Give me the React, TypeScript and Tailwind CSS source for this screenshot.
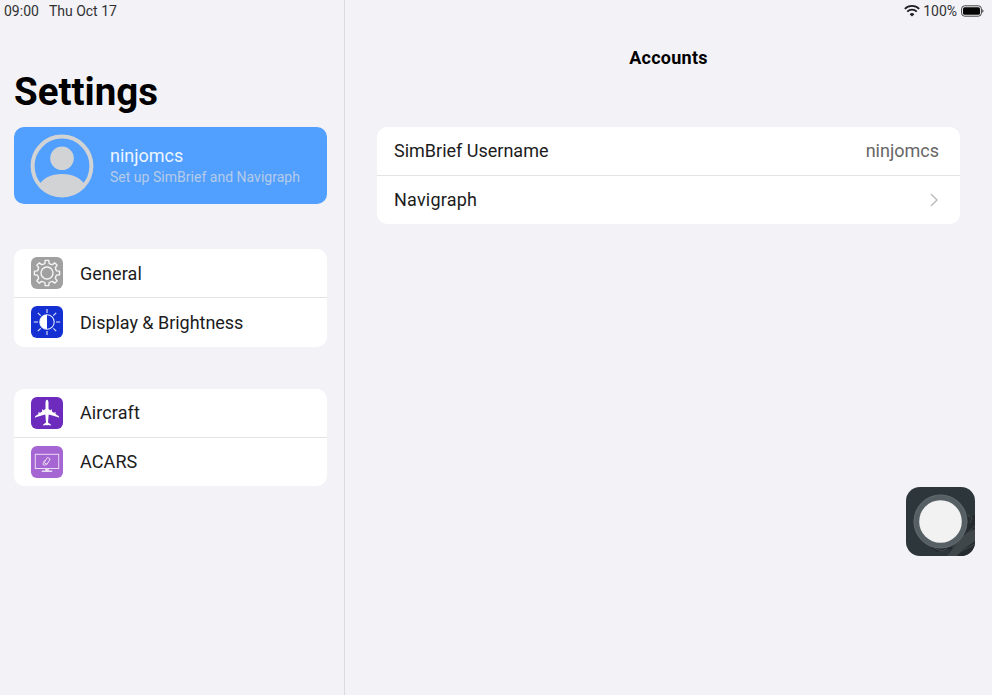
import type { ReactNode } from "react";

function GearIcon() {
  const teeth = Array.from({ length: 8 }, (_, i) => i * 45);
  const at = (deg: number, r: number) => {
    const a = ((deg - 90) * Math.PI) / 180;
    return `${(16 + r * Math.cos(a)).toFixed(2)} ${(16 + r * Math.sin(a)).toFixed(2)}`;
  };
  const d =
    teeth
      .map(
        (t, i) =>
          `${i === 0 ? "M" : "L"}${at(t - 12, 10)} L${at(t - 8, 12.7)} L${at(t + 8, 12.7)} L${at(t + 12, 10)} Q${at(t + 22.5, 9.1)} ${at(t + 33, 10)}`
      )
      .join(" ") + "Z";
  return (
    <svg viewBox="0 0 32 32" className="size-8 shrink-0" fill="none" stroke="#f4f4f4" strokeWidth="1.4" strokeLinejoin="round">
      <rect width="32" height="32" rx="6" fill="#a0a0a0" stroke="none" />
      <path d={d} />
      <circle cx="16" cy="16" r="6" />
    </svg>
  );
}

function BrightnessIcon() {
  return (
    <svg viewBox="0 0 32 32" className="-mt-[2px] size-8 shrink-0" fill="none" stroke="#e3e8fb" strokeWidth="1.1">
      <rect width="32" height="32" rx="6" fill="#1430d2" stroke="none" />
      <circle cx="16" cy="16" r="7.2" />
      <path d="M16 8.8a7.2 7.2 0 0 0 0 14.4z" fill="#fff" stroke="none" />
      <path d="M16 3v4M16 25v4M2.8 16H7M25 16h4.2M6.8 6.8l2.9 2.9M22.3 22.3l2.9 2.9M25.2 6.8l-2.9 2.9M9.7 22.3l-2.9 2.9" />
    </svg>
  );
}

function PlaneIcon() {
  return (
    <svg viewBox="0 0 32 32" className="size-8 shrink-0">
      <rect width="32" height="32" rx="6" fill="#6c2bbd" />
      <path
        fill="#fff"
        d="M16 2.8c-.9 0-1.5 1.6-1.5 3.3v6l-2.3 1.5v-1.2h-1.1v2l-2.6 1.8v-1.1h-1v1.8l-3 2.1c-.5.4-.6.9-.6 1.7l1.6-.6 8.8-2.5.7 7.8-2.7 2c-.4.3-.4.7-.4 1.2l3.3-.6.8.5.8-.5 3.3.6c0-.5 0-.9-.4-1.2l-2.7-2 .7-7.8 8.8 2.5 1.6.6c0-.8-.1-1.3-.6-1.7l-3-2.1v-1.8h-1v1.1l-2.6-1.8v-2h-1.1v1.2l-2.3-1.5v-6c0-1.7-.6-3.3-1.5-3.3z"
      />
    </svg>
  );
}

function AcarsIcon() {
  return (
    <svg viewBox="0 0 32 32" className="size-8 shrink-0" fill="none" stroke="#eadbf5" strokeWidth="1">
      <rect width="32" height="32" rx="6" fill="#a565d2" stroke="none" />
      <rect x="4.3" y="8.3" width="23.4" height="14.2" />
      <path d="M14.2 22.2h3.6v2.4h3.4V26H10.8v-1.4h3.4z" fill="#eadbf5" stroke="none" />
      <path d="M16.4 11.4l2.8 1.6-3.2 5.3-2.8-1.6zM13.6 14.3c-1.4 1.6-1.7 3.3-1.2 4.7 1.6.3 3-.1 4.3-1.4" />
    </svg>
  );
}

function Avatar() {
  return (
    <svg viewBox="0 0 64 64" className="size-16 shrink-0">
      <clipPath id="avatar-disc">
        <circle cx="32" cy="32" r="31" />
      </clipPath>
      <circle cx="32" cy="32" r="29.4" fill="none" stroke="#d2d3d5" strokeWidth="4" />
      <circle cx="32" cy="24.3" r="11.8" fill="#d2d3d5" />
      <path d="M8 53C12 44 21 40 32 40s20 4 24 13v11H8z" fill="#d2d3d5" clipPath="url(#avatar-disc)" />
    </svg>
  );
}

function WifiIcon() {
  return (
    <svg viewBox="0 0 16 13" className="-mt-px h-[13px] w-4" fill="none" stroke="#202020" strokeWidth="1.7">
      <path d="M.8 4.9a10.2 10.2 0 0 1 14.4 0M3.2 7.7a6.8 6.8 0 0 1 9.6 0" />
      <path d="M5.6 10.2a3.4 3.4 0 0 1 4.8 0L8 12.6z" fill="#202020" stroke="none" />
    </svg>
  );
}

function BatteryIcon() {
  return (
    <svg viewBox="0 0 23 12" className="-mt-px h-3 w-[23px]">
      <rect x=".6" y=".8" width="19.8" height="10.4" rx="3" fill="none" stroke="#444" strokeWidth="1" />
      <rect x="2" y="2.2" width="17" height="7.6" rx="1.6" fill="#050505" />
      <path d="M21.3 4.2c1.6.5 1.6 3 0 3.5z" fill="#333" />
    </svg>
  );
}

function MenuRow({ icon, label, className }: { icon: ReactNode; label: string; className: string }) {
  return (
    <div className={`flex items-center gap-[17px] pl-[17px] ${className}`}>
      {icon}
      <span className="text-[18px] text-[#1c1c1c]">{label}</span>
    </div>
  );
}

function HomeButton() {
  return (
    <svg viewBox="0 0 69 69" className="absolute top-[487px] left-[906px] size-[69px]">
      <clipPath id="home-tile">
        <rect width="69" height="69" rx="14" />
      </clipPath>
      <g clipPath="url(#home-tile)">
        <rect width="69" height="69" fill="#2d363a" />
        <path d="M69 28L61 31 47 59 24 59 31 65 45 62 42 69 69 69z" fill="#252b2f" />
        <path d="M69 42C58 46 52 55 41 69h9c7-8 13-10 19-15z" fill="#40474b" />
        <path d="M50 69c5-6 12-8 19-12M46 61C55 54 60 46 69 39M28 61l7 3 6-2M62 28l4 3-2 5" stroke="#4b5256" strokeWidth=".8" fill="none" />
        <circle cx="34.5" cy="34.5" r="27" fill="#566064" />
        <circle cx="34.5" cy="34.5" r="26.4" fill="none" stroke="#626b6e" strokeWidth=".8" />
        <circle cx="34.5" cy="34.5" r="21.3" fill="#f2f2f2" />
      </g>
    </svg>
  );
}

export default function App() {
  return (
    <div className="relative flex h-[695px] w-[992px] overflow-hidden bg-[#f2f2f7] font-['Roboto','Liberation_Sans',sans-serif] text-black">
      <aside className="w-[345px] shrink-0 border-r border-[#dcdce0] pr-[17px] pl-[14px]">
        <div className="-ml-[10px] flex h-[22px] items-center gap-[10px] text-[14px] text-[#303033]">
          <span>09:00</span>
          <span>Thu Oct 17</span>
        </div>
        <h1 className="mt-[46px] h-[59px] text-[38.5px] leading-[48px] font-bold">Settings</h1>
        <div className="flex h-[77px] items-center rounded-[10px] bg-[#519fff] pl-4">
          <Avatar />
          <div className="ml-4 pt-px">
            <div className="text-[18px] leading-[22px] text-[#edf5ff]">ninjomcs</div>
            <div className="text-[14px] leading-5 tracking-[0.02px] text-[#b6cbe8]">Set up SimBrief and Navigraph</div>
          </div>
        </div>
        <nav className="mt-[45px] divide-y divide-[#e4e4e7] rounded-[10px] bg-white">
          <MenuRow icon={<GearIcon />} label="General" className="h-[49px] tracking-[0.1px]" />
          <MenuRow icon={<BrightnessIcon />} label="Display & Brightness" className="h-[49px] tracking-[-0.03px]" />
        </nav>
        <nav className="mt-[42px] divide-y divide-[#e4e4e7] rounded-[10px] bg-white">
          <MenuRow icon={<PlaneIcon />} label="Aircraft" className="h-[49px] pb-px tracking-[0.1px]" />
          <MenuRow icon={<AcarsIcon />} label="ACARS" className="h-[48px] pb-px tracking-[0.1px]" />
        </nav>
      </aside>
      <main className="flex-1 pr-8 pl-8">
        <div className="-mr-6 flex h-[22px] items-center justify-end gap-1 text-[14px] text-[#303033]">
          <WifiIcon />
          <span className="-ml-px">100%</span>
          <BatteryIcon />
        </div>
        <h2 className="mt-6 text-center text-[18px] leading-6 font-bold tracking-[0.25px]">Accounts</h2>
        <section className="mt-[57px] divide-y divide-[#e4e4e7] rounded-[10px] bg-white text-[18px]">
          <div className="flex h-[49px] items-center justify-between pr-[21px] pb-px pl-[17px]">
            <span className="text-[#1c1c1c]">SimBrief Username</span>
            <span className="text-[#666]">ninjomcs</span>
          </div>
          <div className="flex h-[48px] items-center justify-between pr-[22px] pb-px pl-[17px]">
            <span className="tracking-[0.2px] text-[#1c1c1c]">Navigraph</span>
            <svg viewBox="0 0 8 14" className="h-[14px] w-2" fill="none" stroke="#bcbcbc" strokeWidth="1.5">
              <path d="M1 1l6 6-6 6" />
            </svg>
          </div>
        </section>
      </main>
      <HomeButton />
    </div>
  );
}
